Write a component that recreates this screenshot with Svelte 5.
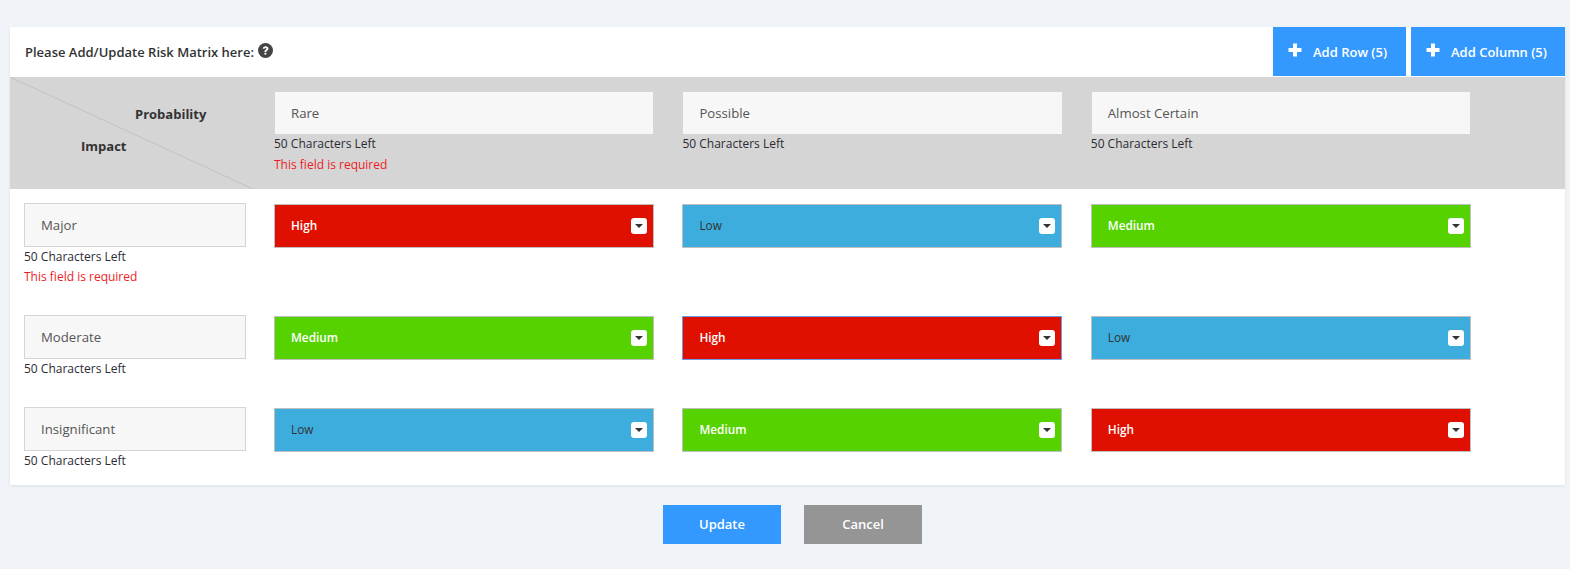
<script lang="ts">
	const probabilities = [
		{ name: 'Rare', error: true },
		{ name: 'Possible', error: false },
		{ name: 'Almost Certain', error: false }
	];

	const rows = [
		{ name: 'Major', error: true, cells: ['High', 'Low', 'Medium'], focus: -1 },
		{ name: 'Moderate', error: false, cells: ['Medium', 'High', 'Low'], focus: 1 },
		{ name: 'Insignificant', error: false, cells: ['Low', 'Medium', 'High'], focus: -1 }
	];
</script>

<div class="page">
	<div class="card">
		<div class="title-bar">
			<div class="title">
				Please Add/Update Risk Matrix here:
				<svg class="help" width="15" height="15" viewBox="0 0 24 24">
					<circle cx="12" cy="12" r="12" fill="#444" />
					<path d="M7.500 9.200c.2-2.500 2-4 4.700-4 2.600 0 4.500 1.500 4.500 3.700 0 1.600-.9 2.500-2.100 3.300-1 .7-1.300 1.100-1.300 2.200h-3c-.1-1.900.5-2.900 1.800-3.700 1-.7 1.400-1.100 1.400-1.700 0-.7-.6-1.200-1.400-1.200-.9 0-1.500.6-1.700 1.500z" fill="#fff" />
					<rect x="10.300" y="15.600" width="3" height="3" fill="#fff" />
				</svg>
			</div>
			<div class="title-actions">
				<button class="add add-row">
					<svg width="14" height="14" viewBox="0 0 14 14"><path d="M5 .5h4V5h4.500v4H9v4.500H5V9H.5V5H5z" fill="#fff" /></svg>
					<span>Add Row (5)</span>
				</button>
				<button class="add add-col">
					<svg width="14" height="14" viewBox="0 0 14 14"><path d="M5 .5h4V5h4.500v4H9v4.500H5V9H.5V5H5z" fill="#fff" /></svg>
					<span>Add Column (5)</span>
				</button>
			</div>
		</div>

		<div class="matrix-head">
			<div class="corner">
				<svg class="diagonal" width="244" height="112" viewBox="0 0 244 112">
					<line x1="0" y1="0" x2="243" y2="112" stroke="#c2c2c2" stroke-width="1" />
				</svg>
				<div class="prob">Probability</div>
				<div class="impact">Impact</div>
			</div>
			{#each probabilities as p}
				<div class="head-cell">
					<div class="field head-field">{p.name}</div>
					<div class="hint">50 Characters Left</div>
					{#if p.error}
						<div class="error">This field is required</div>
					{/if}
				</div>
			{/each}
		</div>

		{#each rows as row, i}
			<div class="matrix-row" class:first={i === 0}>
				<div class="label-cell">
					<div class="field label-field">{row.name}</div>
					<div class="hint">50 Characters Left</div>
					{#if row.error}
						<div class="error">This field is required</div>
					{/if}
				</div>
				{#each row.cells as level, j}
					<div class="select-cell">
						<div class="select {level.toLowerCase()}" class:focused={row.focus === j}>
							<span class="value">{level}</span>
							<span class="caret"><i></i></span>
						</div>
					</div>
				{/each}
			</div>
		{/each}
	</div>

	<div class="actions">
		<button class="action update">Update</button>
		<button class="action cancel">Cancel</button>
	</div>
</div>

<style>
	:global(body) {
		margin: 0;
		background: #f0f3f8;
	}

	.page {
		height: 569px;
		padding: 27px 5px 0 10px;
		box-sizing: border-box;
		font-family: 'Open Sans', 'Liberation Sans', sans-serif;
		color: #333;
		overflow: hidden;
	}

	.card {
		height: 458px;
		background: #fff;
		box-shadow: 0 1px 3px rgba(0, 0, 0, 0.08);
	}

	.title-bar {
		height: 50px;
		display: flex;
		justify-content: space-between;
	}

	.title {
		display: flex;
		align-items: center;
		gap: 4px;
		padding: 0 0 0 15px;
		font-size: 13px;
		font-weight: 600;
		color: #333;
	}

	.help {
		margin-top: -3px;
	}

	.title-actions {
		display: flex;
		gap: 5px;
		height: 49px;
	}

	.add {
		display: flex;
		align-items: center;
		border: 0;
		padding: 0 0 0 15px;
		gap: 11px;
		background: #3399ff;
		color: #fff;
		font: 600 13px 'Open Sans', sans-serif;
	}

	.add svg {
		margin-top: -3px;
	}

	.add-row {
		width: 133px;
	}

	.add-col {
		width: 154px;
	}

	.matrix-head {
		height: 112px;
		background: #d5d5d5;
		display: grid;
		grid-template-columns: 264px 408.400px 408.400px 408.400px;
	}

	.corner {
		position: relative;
		font-size: 13px;
		font-weight: 700;
		color: #333;
	}

	.diagonal {
		position: absolute;
		left: 0;
		top: 0;
	}

	.prob {
		margin: 28px 0 0 125px;
		line-height: 18px;
	}

	.impact {
		margin: 14px 0 0 71px;
		line-height: 18px;
	}

	.head-cell {
		padding-top: 15px;
	}

	.field {
		box-sizing: border-box;
		height: 44px;
		padding-left: 16px;
		display: flex;
		align-items: center;
		background: #f7f7f7;
		font-size: 13.200px;
		color: #555;
	}

	.head-field {
		width: 378.400px;
		height: 42px;
		margin-left: 1px;
		margin-bottom: 1px;
	}

	.hint {
		font-size: 12px;
		line-height: 20px;
		color: #2b2b33;
	}

	.head-cell .hint {
		margin-top: -1px;
	}

	.error {
		font-size: 12px;
		line-height: 20px;
		color: #ee1c25;
	}

	.head-cell .error {
		margin-top: 1px;
	}

	.matrix-row {
		display: grid;
		grid-template-columns: 250px 408.400px 408.400px 408.400px;
		padding-left: 14px;
		height: 92px;
	}

	.matrix-row.first {
		padding-top: 14px;
		height: 126px;
		box-sizing: border-box;
	}

	.label-field {
		width: 222px;
		border: 1px solid #d5d5d5;
	}

	.select-cell {
		padding-top: 1px;
	}

	.select {
		box-sizing: border-box;
		width: 380px;
		height: 44px;
		display: flex;
		align-items: center;
		justify-content: space-between;
		padding: 0 6px 0 16px;
		border: 1px solid #bfbfbf;
		font-size: 11.800px;
	}

	.value {
		margin-top: -2px;
	}

	.select.focused {
		border-color: #6b9ae8;
	}

	.high {
		background: #e01000;
		color: #fff;
		font-weight: 600;
	}

	.medium {
		background: #55d200;
		color: #fff;
		font-weight: 600;
	}

	.low {
		background: #3daddd;
		color: #333;
	}

	.caret {
		width: 16px;
		height: 16px;
		border-radius: 3px;
		background: #fff;
		display: flex;
		align-items: center;
		justify-content: center;
	}

	.caret i {
		display: block;
		width: 0;
		height: 0;
		border-left: 4px solid transparent;
		border-right: 4px solid transparent;
		border-top: 4.500px solid #333;
	}

	.actions {
		display: flex;
		justify-content: center;
		gap: 23px;
		padding-top: 20px;
		margin-left: 10px;
	}

	.action {
		width: 118px;
		height: 39px;
		border: 0;
		padding: 0 0 2px;
		color: #fff;
		font: 600 13px 'Open Sans', sans-serif;
	}

	.update {
		background: #3399ff;
	}

	.cancel {
		background: #959595;
	}
</style>
